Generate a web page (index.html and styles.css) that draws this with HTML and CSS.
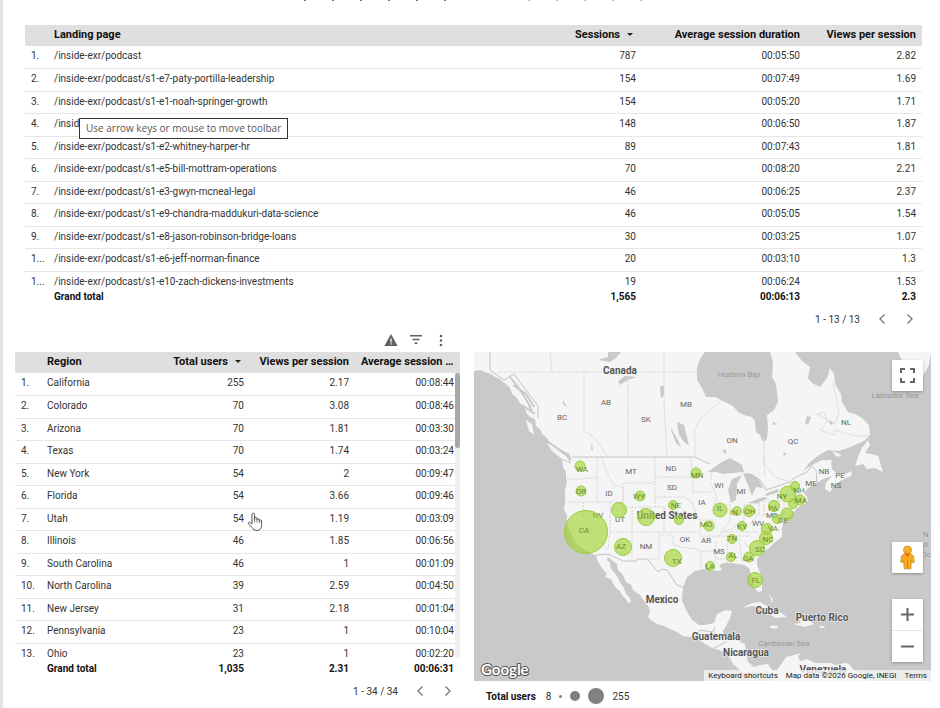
FILE: index.html
```
<!DOCTYPE html>
<html lang="en">
<head>
	<meta charset="utf-8">
	<title>Podcast report</title>
	<link rel="stylesheet" href="styles.css">
</head>
<body>
	<main class="page">
		<div class="cut-line" aria-hidden="true"><i></i><i></i><i></i><i></i><i></i><i></i><i></i><i></i><i></i><i></i><i></i><i></i><i></i></div>

		<section class="landing">
			<table class="report">
				<colgroup><col class="num"><col><col class="sessions"><col class="duration"><col class="views"></colgroup>
				<thead>
					<tr><th></th><th>Landing page</th><th>Sessions<span class="sort"></span></th><th>Average session duration</th><th>Views per session</th></tr>
				</thead>
				<tbody>
					<tr><td>1.</td><td>/inside-exr/podcast</td><td>787</td><td>00:05:50</td><td>2.82</td></tr>
					<tr><td>2.</td><td>/inside-exr/podcast/s1-e7-paty-portilla-leadership</td><td>154</td><td>00:07:49</td><td>1.69</td></tr>
					<tr><td>3.</td><td>/inside-exr/podcast/s1-e1-noah-springer-growth</td><td>154</td><td>00:05:20</td><td>1.71</td></tr>
					<tr><td>4.</td><td>/inside</td><td>148</td><td>00:06:50</td><td>1.87</td></tr>
					<tr><td>5.</td><td>/inside-exr/podcast/s1-e2-whitney-harper-hr</td><td>89</td><td>00:07:43</td><td>1.81</td></tr>
					<tr><td>6.</td><td>/inside-exr/podcast/s1-e5-bill-mottram-operations</td><td>70</td><td>00:08:20</td><td>2.21</td></tr>
					<tr><td>7.</td><td>/inside-exr/podcast/s1-e3-gwyn-mcneal-legal</td><td>46</td><td>00:06:25</td><td>2.37</td></tr>
					<tr><td>8.</td><td>/inside-exr/podcast/s1-e9-chandra-maddukuri-data-science</td><td>46</td><td>00:05:05</td><td>1.54</td></tr>
					<tr><td>9.</td><td>/inside-exr/podcast/s1-e8-jason-robinson-bridge-loans</td><td>30</td><td>00:03:25</td><td>1.07</td></tr>
					<tr><td>1...</td><td>/inside-exr/podcast/s1-e6-jeff-norman-finance</td><td>20</td><td>00:03:10</td><td>1.3</td></tr>
					<tr><td>1...</td><td>/inside-exr/podcast/s1-e10-zach-dickens-investments</td><td>19</td><td>00:06:24</td><td>1.53</td></tr>
				</tbody>
				<tfoot>
					<tr><td></td><td>Grand total</td><td>1,565</td><td>00:06:13</td><td>2.3</td></tr>
				</tfoot>
			</table>
			<div class="pager">
				<span>1 - 13 / 13</span>
				<button type="button" aria-label="Previous page"><svg width="8" height="12" viewBox="0 0 8 12"><path d="M6.500 1.500 2 6l4.500 4.500"/></svg></button>
				<button type="button" aria-label="Next page"><svg width="8" height="12" viewBox="0 0 8 12"><path d="M1.500 1.500 6 6l-4.500 4.500"/></svg></button>
			</div>
			<div class="tooltip" role="tooltip">Use arrow keys or mouse to move toolbar</div>
		</section>

		<div class="bottom">
			<section class="regions">
				<div class="tools">
					<button type="button" aria-label="Warning"><svg width="14" height="14" viewBox="0 0 14 14"><path d="M7 0 .3 12h13.400z" fill="#616161"/><path d="M6.400 4.500h1.300v3.800H6.400zM6.400 9.200h1.300v1.400H6.400z" fill="#fff"/></svg></button>
					<button type="button" aria-label="Filter"><svg width="14" height="14" viewBox="0 0 14 14"><path d="M1 1h12v1.400H1zM3.500 4.800h7v1.400h-7zM5.500 8.600h3V10h-3z" fill="#616161"/></svg></button>
					<button type="button" aria-label="More"><svg width="14" height="14" viewBox="0 0 14 14"><circle cx="7" cy="2" r="1.300" fill="#616161"/><circle cx="7" cy="6.500" r="1.300" fill="#616161"/><circle cx="7" cy="11" r="1.300" fill="#616161"/></svg></button>
				</div>
				<div class="scroller">
					<table class="report">
						<colgroup><col class="num-wide"><col><col class="users"><col class="metric"><col class="metric"></colgroup>
						<thead>
							<tr><th></th><th>Region</th><th>Total users<span class="sort"></span></th><th>Views per session</th><th>Average session ...</th></tr>
						</thead>
						<tbody>
							<tr><td>1.</td><td>California</td><td>255</td><td>2.17</td><td>00:08:44</td></tr>
							<tr><td>2.</td><td>Colorado</td><td>70</td><td>3.08</td><td>00:08:46</td></tr>
							<tr><td>3.</td><td>Arizona</td><td>70</td><td>1.81</td><td>00:03:30</td></tr>
							<tr><td>4.</td><td>Texas</td><td>70</td><td>1.74</td><td>00:03:24</td></tr>
							<tr><td>5.</td><td>New York</td><td>54</td><td>2</td><td>00:09:47</td></tr>
							<tr><td>6.</td><td>Florida</td><td>54</td><td>3.66</td><td>00:09:46</td></tr>
							<tr><td>7.</td><td>Utah</td><td>54</td><td>1.19</td><td>00:03:09</td></tr>
							<tr><td>8.</td><td>Illinois</td><td>46</td><td>1.85</td><td>00:06:56</td></tr>
							<tr><td>9.</td><td>South Carolina</td><td>46</td><td>1</td><td>00:01:09</td></tr>
							<tr><td>10.</td><td>North Carolina</td><td>39</td><td>2.59</td><td>00:04:50</td></tr>
							<tr><td>11.</td><td>New Jersey</td><td>31</td><td>2.18</td><td>00:01:04</td></tr>
							<tr><td>12.</td><td>Pennsylvania</td><td>23</td><td>1</td><td>00:10:04</td></tr>
							<tr><td>13.</td><td>Ohio</td><td>23</td><td>1</td><td>00:02:20</td></tr>
						</tbody>
						<tfoot>
							<tr><td></td><td>Grand total</td><td>1,035</td><td>2.31</td><td>00:06:31</td></tr>
						</tfoot>
					</table>
					<div class="track"><div class="thumb"></div></div>
					<svg class="pointer" width="16" height="20" viewBox="0 0 16 20"><path d="M5 12V2.500a1.300 1.300 0 0 1 2.600 0V8V6.500a1.200 1.200 0 0 1 2.400 0V8a1.200 1.200 0 0 1 2.400 0v1a1.100 1.100 0 0 1 2.200 0v4.500c0 3-2 5-4.600 5-2.400 0-3.800-1-5-3L1.300 11.500c-.5-1 .8-1.800 1.700-1z" fill="#fff" stroke="#555" stroke-width="1"/><path d="M7.600 8v2.500M10 8v2.500M12.400 9v2" stroke="#555" stroke-width=".8"/></svg>
				</div>
				<div class="pager">
					<span>1 - 34 / 34</span>
					<button type="button" aria-label="Previous page"><svg width="8" height="12" viewBox="0 0 8 12"><path d="M6.500 1.500 2 6l4.500 4.500"/></svg></button>
					<button type="button" aria-label="Next page"><svg width="8" height="12" viewBox="0 0 8 12"><path d="M1.500 1.500 6 6l-4.500 4.500"/></svg></button>
				</div>
			</section>

			<section class="map-panel">
				<div class="map">
					<svg class="map-svg" viewBox="0 0 457 329" role="img" aria-label="Total users by region">
						<rect width="457" height="329" fill="#c9c9c9"/>
						<!-- mainland -->
						<g fill="#f5f5f5">
							<path d="M0 0V19L6 18 11 20 17 22 21 25 26 27 29 30 33 33 36 36 38 42 43 46 46 51 51 56 53 62 56 65 61 67 62 74 66 77 68 82 73 86 76 91 82 95 88 98 95 102 97 106 96 112 94 110 88 108 89 115 92 120 92 126 93 130 91 138 91 150 90 157 93 163 93 171 95 177 98 183 101 190 106 195 113 199 118 202 122 203 124 210 128 216 133 222 131 225 137 227 141 235 146 239 148 243 152 247 154 251 157 250 156 246 152 242 150 236 147 232 144 226 140 220 137 217 136 211 133 208 134 205 139 209 143 212 144 218 149 223 152 230 157 233 159 238 166 243 170 249 175 255 176 260 174 265 178 269 183 272 190 274 196 277 203 280 209 284 216 285 221 286 227 289 231 292 238 296 245 298 251 301 256 306 259 312 266 318 272 322 280 319 288 321 293 318 299 329 457 329H394L388 322 380 318 375 312 371 311 362 313 356 311 348 311 341 311 333 307 326 309 324 304 327 301 320 303 312 305 308 311 303 318 298 318 294 312 286 313 280 315 274 310 272 301 271 292 262 288 251 286 249 279 252 274 256 266 258 259 252 258 243 262 240 271 231 273 225 273 218 268 212 258 208 248 209 235 213 225 221 219 231 217 238 218 244 219 248 218 245 213 250 211 257 211 264 212 270 213 275 216 277 223 278 231 281 236 284 240 288 239 288 232 286 221 283 213 283 207 288 201 295 196 301 190 308 185 308 178 309 171 313 166 319 161 323 156 328 153 334 150 333 145 330 141 334 136 341 132 349 127 358 124 352 131 351 137 356 140 360 134 366 129 377 124 378 119 371 122 362 121 358 117 357 111 358 108 348 108 340 112 329 119 336 110 345 103 354 98 365 99 374 96 383 92 390 89 396 83 395 73 388 66 381 62 374 60 368 50 367 42 361 32 360 22 356 16 353 26 346 35 338 31 334 26 336 15 328 9 321 0H296L299 10 298 25 302 32 303 40 304 50 300 58 293 63 294 76 293 87 289 90 286 83 282 80 281 69 278 65 270 63 264 60 259 54 251 50 241 45 232 45 228 36 223 28 223 16 226 7 231 0Z"/>
							<path d="M394 88 396 93 391 101 397 102 404 104 406 110 409 120 401 116 393 117 389 112 381 114 384 105 388 96Z"/>
							<path d="M424 0 428 9 434 17 449 24 455 13 457 0Z"/>
							<path d="M268 256 278 251 286 250 296 256 306 260 313 265 301 266 295 261 285 255 278 254Z"/>
							<path d="M319 272 327 271 324 266 333 267 340 272 331 275Z"/>
							<ellipse cx="300" cy="275" rx="4" ry="1.500"/>
							<ellipse cx="348" cy="275" rx="3" ry="1"/>
							<path d="M52 68 58 72 60 83 55 79ZM73 91 80 94 92 104 96 110 88 107 78 99ZM295 241 299 248 298 251ZM358 99 368 103 363 105Z"/>
						</g>
						<!-- islands and fjords of the north west -->
						<g fill="none" stroke="#c9c9c9" stroke-width="2">
							<path d="M36 25 44 35 52 47 58 59M39 33 52 42 60 55M48 53 61 62M72 88 92 103"/>
						</g>
						<!-- lakes -->
						<g fill="#c9c9c9">
							<path d="M234 120 246 111 256 106 268 113 270 120 259 121 249 122 242 120Z"/>
							<path d="M254 138 258 127 268 123 263 132 262 148 257 151Z"/>
							<path d="M269 121 278 122 284 126 289 136 282 135 278 144 274 133Z"/>
							<path d="M274 151 289 145 294 146 284 151ZM291 142 304 137 305 140 293 144Z"/>
							<path d="M124 8 134 5 134 0 147 0 142 6 136 10ZM144 29 151 24 163 25 154 28 146 33ZM203 70 210 73 213 85 215 94 210 90 205 83ZM196 75 203 86 207 95 202 91ZM186 35 190 33 190 43 187 46ZM89 48 93 55 89 52ZM118 90 119 99 117 97ZM333 64 337 65 334 73 331 71ZM299 70 304 72 299 73ZM248 99 252 97 252 102ZM309 100 313 102 310 104ZM354 69 360 70 357 73Z"/>
						</g>
						<g class="country">
							<path d="M16 0V18L30 28 40 22 52 38 64 54 64 66M98 105H221L229 109 236 112M272 121 286 128 292 138 304 134 316 130 320 126 333 120 338 114 342 118 343 130M122 203 134 202 149 209H162L163 207H173L184 220 188 217 193 218 203 233 211 236M221 286 226 278 239 280 241 275M240 296 252 290M255 304 272 300"/>
						</g>
						<g class="state">
							<path d="M24 20H223M110 20V79L119 84 128 96 134 105M154 20V105M190 0 190 50 193 105M248 48 226 67 221 77V105M76 0 78 20M93 126 100 128 124 125M123 105V150M91 150H149V131H181M127 105 130 113 139 133 149 135V155H190V163M181 105V155M181 125H216M181 145H210L218 150M109 150V168L134 198M136 150V180L134 198M136 180H226M158 155V207M190 155V180M185 180V207H173M185 183H199V193L207 195 221 197 227 199V218M216 105 219 124V140M219 140H238M218 150 222 162 226 168V184M190 163H223M226 168H242M226 184H275M228 199H241V211M238 120 236 130 243 145 240 153M240 153H256V150M256 153V170L249 177 244 186M270 153V168L258 177 249 179M270 153 285 151V162L276 172M242 190V207H251M253 188V211M265 186 268 209H282M247 180 290 180 309 177M270 190 284 203M290 163V149H310V164M285 163H313M320 136V152M325 132V150M290 104 291 125M290 85V112L301 125 317 130M344 62 350 60 353 70 346 78 360 83 361 78 380 84H395M343 62 361 72 365 60 359 30"/>
						</g>
						<g class="abbr">
							<text x="132" y="53">AB</text><text x="88" y="68">BC</text><text x="172" y="70">SK</text><text x="212" y="55">MB</text>
							<text x="258" y="91">ON</text><text x="319" y="92">QC</text><text x="372" y="73">NL</text><text x="350" y="122">NB</text>
							<text x="366" y="126">PE</text><text x="362" y="136">NS</text><text x="337" y="134">ME</text>
							<text x="157" y="122">MT</text><text x="197" y="119">ND</text><text x="198" y="138">SD</text><text x="135" y="144">ID</text>
							<text x="124" y="166">NV</text><text x="146" y="170">UT</text><text x="172" y="197">NM</text><text x="211" y="190">OK</text>
							<text x="245" y="136">WI</text><text x="267" y="142">MI</text><text x="228" y="153">IA</text><text x="284" y="174">WV</text>
							<text x="298" y="166">MD</text><text x="232" y="191">AR</text><text x="245" y="202">MS</text>
						</g>
						<g class="place">
							<text x="146" y="22">Canada</text><text x="193" y="167">United States</text><text x="188" y="251">Mexico</text>
							<text x="242" y="288">Guatemala</text><text x="293" y="262">Cuba</text><text x="348" y="269">Puerto Rico</text>
							<text x="272" y="304">Nicaragua</text><text x="349" y="321">Venezuela</text>
						</g>
						<g class="sea">
							<text x="265" y="25">Hudson Bay</text><text x="421" y="46">Labrador Sea</text><text x="310" y="294">Caribbean Sea</text>
							<text class="ocean" x="449" y="185">N</text><text class="ocean" x="445" y="195">Atl</text><text class="ocean" x="447" y="205">Oc</text>
						</g>
						<g class="bubbles">
							<circle cx="106" cy="114" r="5"/><circle cx="107" cy="139" r="5"/><circle cx="112" cy="180" r="21.500"/>
							<circle cx="145" cy="158" r="7.500"/><circle cx="149" cy="195" r="8.500"/><circle cx="172" cy="165" r="8.500"/>
							<circle cx="166" cy="144" r="5"/><circle cx="199" cy="153" r="4.500"/><circle cx="205" cy="168" r="4.500"/>
							<circle cx="199" cy="206" r="8.500"/><circle cx="222" cy="121" r="5"/><circle cx="246" cy="158" r="7"/>
							<circle cx="263" cy="159" r="4.500"/><circle cx="275" cy="159" r="5.500"/><circle cx="235" cy="174" r="5"/>
							<circle cx="268" cy="174" r="4.500"/><circle cx="258" cy="187" r="4.500"/><circle cx="257" cy="205" r="4.500"/>
							<circle cx="275" cy="205" r="5"/><circle cx="236" cy="214" r="4.500"/><circle cx="283" cy="196" r="7.500"/>
							<circle cx="292" cy="186" r="6.500"/><circle cx="293" cy="177" r="5.500"/><circle cx="303" cy="167" r="4.500"/>
							<circle cx="313" cy="162" r="6"/><circle cx="300" cy="154" r="5.500"/><circle cx="314" cy="142" r="8"/>
							<circle cx="321" cy="134" r="4.500"/><circle cx="319" cy="152" r="4.500"/><circle cx="326" cy="148" r="5"/>
							<circle cx="281" cy="228" r="7.500"/>
						</g>
						<g class="abbr on-bubble">
							<text x="108" y="120">WA</text><text x="107" y="142">OR</text><text x="110" y="181">CA</text><text x="165" y="147">WY</text>
							<text x="202" y="156">NE</text><text x="147" y="197">AZ</text><text x="203" y="212">TX</text><text x="223" y="126">MN</text>
							<text x="246" y="159">IL</text><text x="260" y="163">IN</text><text x="276" y="162">OH</text><text x="232" y="175">MO</text>
							<text x="268" y="177">KY</text><text x="299" y="159">PA</text><text x="309" y="171">DE</text><text x="299" y="179">VA</text>
							<text x="294" y="190">NC</text><text x="286" y="200">SC</text><text x="258" y="189">TN</text><text x="259" y="206">AL</text>
							<text x="274" y="209">GA</text><text x="236" y="217">LA</text><text x="282" y="231">FL</text><text x="308" y="147">NY</text>
							<text x="325" y="141">NH</text><text x="327" y="151">MA</text>
						</g>
						<text class="brand" x="7" y="323">Google</text>
					</svg>
					<button type="button" class="map-btn full" aria-label="Toggle fullscreen"><svg width="15" height="15" viewBox="0 0 15 15"><path d="M1 5V1h4M10 1h4v4M14 10v4h-4M5 14H1v-4" fill="none" stroke="#666" stroke-width="2"/></svg></button>
					<div class="map-controls">
						<button type="button" class="map-btn" aria-label="Street View"><svg width="15" height="25" viewBox="0 0 15 25"><path d="M4.500 8.500h6L13.500 11l.8 6-2.300.8-.7-3-.5 9H4.200l-.5-9-.7 3L.7 17l.8-6z" fill="#f9ab1c" stroke="#c88a2c" stroke-width=".8"/><path d="M7.500 15v8.500" stroke="#d08918"/><circle cx="7.500" cy="5" r="4" fill="#fbb024" stroke="#c88a2c" stroke-width=".8"/><path d="M4.500 8.500h6l-3 3.500z" fill="#e86b1d"/></svg></button>
						<div class="zoom">
							<button type="button" aria-label="Zoom in"><svg width="13" height="13" viewBox="0 0 13 13"><path d="M6.500 0v13M0 6.500h13" stroke="#666" stroke-width="2"/></svg></button>
							<button type="button" aria-label="Zoom out"><svg width="13" height="13" viewBox="0 0 13 13"><path d="M0 6.500h13" stroke="#666" stroke-width="2"/></svg></button>
						</div>
					</div>
					<div class="credits">
						<button type="button">Keyboard shortcuts</button>
						<span>Map data ©2026 Google, INEGI</span>
						<a href="#">Terms</a>
					</div>
				</div>
				<div class="legend">
					<strong>Total users</strong>
					<span class="low">8</span>
					<i class="dot small"></i>
					<i class="dot medium"></i>
					<i class="dot large"></i>
					<span>255</span>
				</div>
			</section>
		</div>
	</main>
</body>
</html>
```
FILE: styles.css
```
* {
	box-sizing: border-box;
	margin: 0;
	padding: 0;
}

body {
	background-color: #e4e4e4;
	font-family: Roboto, "Liberation Sans", sans-serif;
	font-size: 10px;
	color: #333;
	overflow: hidden;
}

button {
	border: 0;
	background: none;
	font: inherit;
	color: inherit;
	cursor: pointer;
	display: flex;
	align-items: center;
	justify-content: center;
}

.page {
	margin-left: 3px;
	min-height: 100vh;
	background-color: #fff;
}

/* tail of the block scrolled off above */
.cut-line {
	display: flex;
	gap: 26px;
	height: 25px;
	padding-left: 301px;
}

.cut-line i {
	width: 2px;
	height: 1px;
	background-color: #777;
}

.cut-line i:nth-child(n+7) {
	background-color: transparent;
}

.cut-line i:nth-child(n+9) {
	background-color: #bbb;
}

/* tables */
.report {
	width: 100%;
	table-layout: fixed;
	border-collapse: collapse;
}

.report th,
.report td {
	padding: 3px 6px 0;
	line-height: 14px;
	text-align: right;
	vertical-align: top;
	white-space: nowrap;
	overflow: hidden;
	text-overflow: ellipsis;
}

.report th:nth-child(-n+2),
.report td:nth-child(-n+2) {
	text-align: left;
}

.report th {
	font-size: 11px;
	font-weight: 700;
	color: #111;
	background-color: #dfdfdf;
}

.report thead tr {
	height: 21px;
}

.report tbody tr {
	height: 22px;
	border-bottom: 1px solid #e6e6e6;
}

.report tbody tr:nth-child(even) {
	height: 23px;
}

.report tbody tr:last-child {
	height: 18px;
	border-bottom: 0;
}

.report td:first-child {
	padding-right: 0;
}

.report tfoot td {
	padding-top: 1px;
	font-weight: 700;
	color: #111;
}

.num { width: 23px; }
.num-wide { width: 26px; }
.sessions { width: 120px; }
.duration { width: 164px; }
.views { width: 116px; }
.users { width: 90px; }
.metric { width: 105px; }

.sort {
	display: inline-block;
	margin: 0 3px 2px 7px;
	border: 3px solid transparent;
	border-top-color: #222;
	border-bottom: 0;
}

.pager {
	display: flex;
	align-items: center;
	justify-content: flex-end;
	gap: 8px;
	height: 30px;
	padding-right: 2px;
}

.pager button {
	width: 20px;
	height: 20px;
}

.pager span {
	margin-right: 4px;
}

.pager path {
	fill: none;
	stroke: #757575;
	stroke-width: 1.3;
}

.landing {
	position: relative;
	margin: 0 18px 0 22px;
}

.tooltip {
	position: absolute;
	left: 54px;
	top: 93px;
	padding: 0 6px;
	border: 1px solid #333;
	background-color: #fff;
	font-family: "Open Sans", "Noto Sans", sans-serif;
	line-height: 19px;
	color: #575757;
}

/* lower half */
.bottom {
	display: grid;
	grid-template-columns: 445fr 457fr;
	column-gap: 14px;
	margin: 0 9px 0 12px;
}

.tools {
	display: flex;
	align-items: flex-start;
	justify-content: flex-end;
	gap: 11px;
	height: 18px;
	padding-right: 12px;
}

.scroller {
	position: relative;
}

.track {
	position: absolute;
	top: 21px;
	right: 0;
	bottom: 18px;
	width: 5px;
	background-color: #efefef;
}

.thumb {
	height: 75px;
	border-radius: 3px;
	background-color: #a8a8a8;
}

.pointer {
	position: absolute;
	left: 232px;
	top: 160px;
}

.map-panel {
	padding-top: 18px;
}

.map {
	position: relative;
}

.map-svg {
	display: block;
	width: 100%;
}

.country {
	fill: none;
	stroke: #c4c4c4;
}

.state {
	fill: none;
	stroke: #d6d6d6;
	stroke-dasharray: 2 1;
}

.bubbles {
	fill: rgba(162, 212, 50, .65);
	stroke: #9ccc3c;
}

.map-svg text {
	text-anchor: middle;
}

.abbr {
	font-size: 8px;
	fill: #666;
}

.on-bubble {
	fill: #688b30;
}

.place {
	font-size: 10px;
	font-weight: 700;
	fill: #555;
	stroke: #f5f5f5;
	stroke-width: 1px;
	paint-order: stroke;
}

.sea {
	font-size: 8px;
	fill: #999;
}

.map-svg .ocean {
	text-anchor: start;
}

.map-svg .brand {
	font-family: Lato, sans-serif;
	font-size: 15px;
	font-weight: 700;
	text-anchor: start;
	fill: #fff;
	stroke: #555;
	stroke-width: 2px;
	paint-order: stroke;
}

.map-btn {
	width: 31px;
	height: 31px;
	background-color: #fff;
	border-radius: 1px;
	box-shadow: 0 1px 3px rgba(0, 0, 0, .3);
}

.full {
	position: absolute;
	top: 8px;
	right: 8px;
}

.map-controls {
	position: absolute;
	right: 8px;
	bottom: 19px;
	display: flex;
	flex-direction: column;
	gap: 26px;
}

.zoom {
	background-color: #fff;
	box-shadow: 0 1px 3px rgba(0, 0, 0, .3);
}

.zoom button {
	width: 31px;
	height: 31px;
}

.zoom button:last-child {
	height: 32px;
	border-top: 1px solid #e6e6e6;
}

.credits {
	position: absolute;
	right: 0;
	bottom: 0;
	display: flex;
	font-size: 8px;
	line-height: 11px;
	color: #222;
}

.credits > * {
	padding: 0 4px;
	background-color: rgba(245, 245, 245, .8);
}

.credits a {
	color: inherit;
	text-decoration: none;
}

.legend {
	display: flex;
	align-items: center;
	gap: 8px;
	height: 30px;
	padding-left: 12px;
}

.legend strong {
	color: #111;
}

.low {
	margin-left: 2px;
}

.dot {
	border-radius: 50%;
	background-color: #808080;
}

.small { width: 3px; height: 3px; }
.medium { width: 10px; height: 10px; }
.large { width: 16px; height: 16px; }
```
